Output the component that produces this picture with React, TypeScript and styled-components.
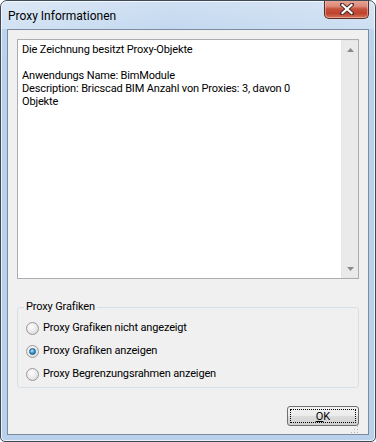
import React from "react";
import styled, { createGlobalStyle } from "styled-components";

const Global = createGlobalStyle`
  html, body { margin: 0; padding: 0; background: #ffffff; }
  body { font-family: Roboto, "Noto Sans", sans-serif; font-size: 11px; color: #000; }
`;

const Window = styled.div`
  box-sizing: border-box;
  width: 376px;
  height: 442px;
  border: 1px solid #3f4a58;
  border-radius: 7px 7px 5px 5px;
  background: linear-gradient(180deg, #c9dcf1 0px, #bcd4ee 28px, #b9d1ea 60px, #b9d1ea 100%);
  box-shadow: inset 0 0 0 1px rgba(255, 255, 255, 0.7);
  display: flex;
  flex-direction: column;
  overflow: hidden;
`;

const TitleBar = styled.div`
  height: 28px;
  display: flex;
  align-items: flex-start;
  justify-content: space-between;
  padding: 0 6px 0 7px;
  background: linear-gradient(90deg, rgba(255,255,255,0.35) 0%, rgba(255,255,255,0.1) 45%, rgba(255,255,255,0.25) 100%);
`;

const Title = styled.span`
  font-size: 12px;
  line-height: 14px;
  margin-top: 8px;
  color: #000;
`;

const CloseButton = styled.div`
  width: 45px;
  height: 19px;
  margin-top: -1px;
  box-sizing: border-box;
  border: 1px solid #5e2a22;
  border-top: none;
  border-radius: 0 0 5px 5px;
  background: linear-gradient(180deg, #e9a898 0%, #dc8a78 35%, #c4513c 50%, #c0432e 75%, #d2755e 100%);
  box-shadow: inset 0 0 0 1px rgba(255, 220, 210, 0.45);
  display: flex;
  align-items: center;
  justify-content: center;
`;

const FrameBody = styled.div`
  flex: 1;
  display: flex;
  padding: 0 6px 6px 6px;
`;

const Client = styled.div`
  flex: 1;
  box-sizing: border-box;
  border: 1px solid #7c8ca0;
  background: #f0f0f0;
  display: flex;
  flex-direction: column;
  padding: 9px 9px 0 9px;
`;

const TextBox = styled.div`
  height: 240px;
  box-sizing: border-box;
  border: 1px solid #abadb3;
  background: #ffffff;
  display: flex;
`;

const TextContent = styled.div`
  flex: 1;
  padding: 3px 4px 0 4px;
  font-size: 11px;
  line-height: 13px;
  letter-spacing: -0.15px;
  white-space: pre-wrap;
`;

const ScrollBar = styled.div`
  width: 17px;
  box-sizing: border-box;
  border: 1px solid #e6e6e6;
  border-right: none;
  background: #eaeaea;
  display: flex;
  flex-direction: column;
  justify-content: space-between;
  align-items: center;
  padding: 7px 0 6px 0;
`;

const Group = styled.fieldset`
  margin: 21px 0 0 0;
  padding: 7px 0 6px 8px;
  border: 1px solid #d5dfe5;
  border-radius: 3px;
  display: flex;
  flex-direction: column;
  gap: 9px;
  min-width: 0;
`;

const Legend = styled.legend`
  padding: 0 2px;
  margin-left: -2px;
  font-size: 11px;
  line-height: 14px;
  letter-spacing: -0.15px;
`;

const RadioRow = styled.label`
  display: flex;
  align-items: center;
  gap: 4px;
  height: 14px;
  line-height: 14px;
  letter-spacing: -0.15px;
`;

const RadioCircle = styled.span<{ $checked?: boolean }>`
  width: 13px;
  height: 13px;
  box-sizing: border-box;
  border-radius: 50%;
  border: 1px solid #9a9a9a;
  background: radial-gradient(circle at 40% 35%, #ffffff 0%, #e8e8e8 55%, #cfcfcf 100%);
  display: flex;
  align-items: center;
  justify-content: center;
  &::after {
    content: "";
    display: ${(p) => (p.$checked ? "block" : "none")};
    width: 5px;
    height: 5px;
    border-radius: 50%;
    border: 1px solid #1d5a85;
    background: radial-gradient(circle at 40% 35%, #bfe7ff 0%, #3b9bd6 50%, #0d4f8a 100%);
  }
`;

const Footer = styled.div`
  flex: 1;
  display: flex;
  justify-content: flex-end;
  align-items: flex-start;
  padding-top: 18px;
  position: relative;
`;

const OkButton = styled.button`
  width: 72px;
  height: 20px;
  box-sizing: border-box;
  border: 1px solid #6f6f6f;
  border-radius: 3px;
  background: linear-gradient(180deg, #f2f2f2 0%, #ebebeb 48%, #dddddd 52%, #cfcfcf 100%);
  font-family: Roboto, "Noto Sans", sans-serif;
  font-size: 11px;
  padding: 0;
  position: relative;
  color: #000;
  &::before {
    content: "";
    position: absolute;
    inset: 2px;
    border: 1px dotted #000;
    border-radius: 1px;
  }
`;

const Underline = styled.span`
  text-decoration: underline;
`;

const Grip = styled.svg`
  position: absolute;
  right: 1px;
  bottom: 1px;
`;

const Arrow = ({ up }: { up?: boolean }) => (
  <svg width="7" height="4" viewBox="0 0 7 4">
    <path d={up ? "M0 4 L3.5 0 L7 4 Z" : "M0 0 L3.5 4 L7 0 Z"} fill="#8a8a8a" />
  </svg>
);

export default function App() {
  const radios = [
    { label: "Proxy Grafiken nicht angezeigt", checked: false },
    { label: "Proxy Grafiken anzeigen", checked: true },
    { label: "Proxy Begrenzungsrahmen anzeigen", checked: false },
  ];
  return (
    <>
      <Global />
      <Window>
        <TitleBar>
          <Title>Proxy Informationen</Title>
          <CloseButton>
            <svg width="14" height="12" viewBox="0 0 14 12">
              <path
                d="M2 1.5 L12 10.5 M12 1.5 L2 10.5"
                stroke="#4a2a2a"
                strokeWidth="4"
                strokeLinecap="square"
              />
              <path
                d="M2.5 2 L11.5 10 M11.5 2 L2.5 10"
                stroke="#ffffff"
                strokeWidth="2.2"
                strokeLinecap="square"
              />
            </svg>
          </CloseButton>
        </TitleBar>
        <FrameBody>
          <Client>
            <TextBox>
              <TextContent>
                {"Die Zeichnung besitzt Proxy-Objekte\n\nAnwendungs Name: BimModule\nDescription: Bricscad BIM Anzahl von Proxies: 3, davon 0\nObjekte"}
              </TextContent>
              <ScrollBar>
                <Arrow up />
                <Arrow />
              </ScrollBar>
            </TextBox>
            <Group>
              <Legend>Proxy Grafiken</Legend>
              {radios.map((r) => (
                <RadioRow key={r.label}>
                  <RadioCircle $checked={r.checked} />
                  {r.label}
                </RadioRow>
              ))}
            </Group>
            <Footer>
              <OkButton>
                <Underline>O</Underline>K
              </OkButton>
              <Grip width="7" height="7" viewBox="0 0 7 7">
                {[
                  [5, 0],
                  [5, 3],
                  [2, 3],
                  [5, 6],
                  [2, 6],
                  [-1, 6],
                ].map(([x, y], i) => (
                  <rect key={i} x={x + 1} y={y} width="1" height="1" fill="#b0b0b0" />
                ))}
              </Grip>
            </Footer>
          </Client>
        </FrameBody>
      </Window>
    </>
  );
}
